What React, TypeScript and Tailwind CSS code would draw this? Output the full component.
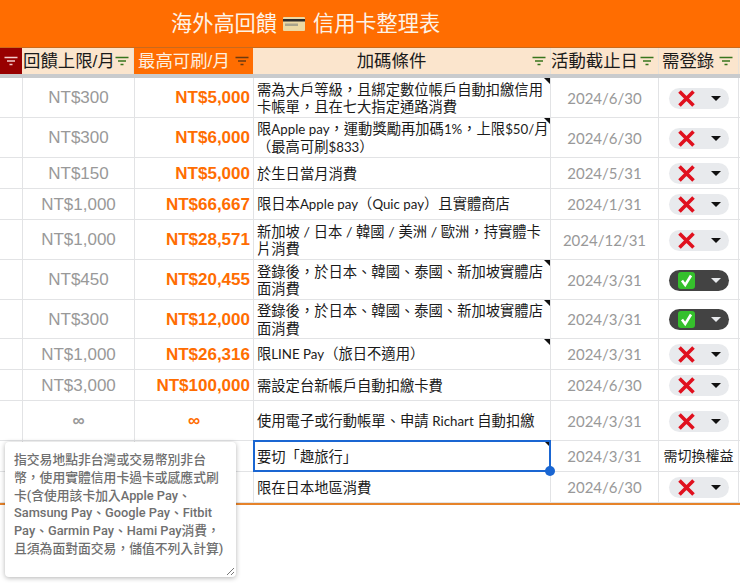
import type { ReactNode } from "react";

const FONT = "font-['Liberation_Sans','Noto_Sans_CJK_TC',sans-serif]";
const COND = "font-['Lato','Noto_Sans_CJK_TC',sans-serif]";
const NOTE = "font-['Roboto','Noto_Sans_CJK_TC',sans-serif]";

function Filter({ color = "#38761d" }: { color?: string }) {
  return (
    <svg width="14" height="10" viewBox="0 0 14 10" className="shrink-0">
      <path d="M0.5 1.5H13.5M3 5H11M5.5 8.5H8.5" stroke={color} strokeWidth="1.4" fill="none" />
    </svg>
  );
}

function Pick({ ok = false }: { ok?: boolean }) {
  return (
    <div className={`flex items-center w-[60px] h-[21px] rounded-full pl-[9px] ${ok ? "bg-[#434343]" : "bg-[#e8eaed]"}`}>
      {ok ? (
        <svg width="17" height="17" viewBox="0 0 17 17">
          <rect x="0" y="0" width="17" height="17" rx="3" fill="#35c02c" />
          <path d="M4 8.5L7.2 13L13 3.5" stroke="#fff" strokeWidth="2.6" fill="none" />
        </svg>
      ) : (
        <svg width="17" height="17" viewBox="0 0 17 17">
          <path d="M1.5 1.5L15.5 15.5M15.5 1.5L1.5 15.5" stroke="#e0101e" strokeWidth="3.6" fill="none" />
        </svg>
      )}
      <svg width="10" height="5" viewBox="0 0 10 5" className="ml-[16px]">
        <path d="M0 0H10L5 5Z" fill={ok ? "#e8eaed" : "#111"} />
      </svg>
    </div>
  );
}

function L({ children }: { children: ReactNode }) {
  return <span className="text-[13.3px]">{children}</span>;
}

type Row = { h: string; cap: string; max: string; cond: ReactNode; date: string; ok?: boolean; tag?: string; note?: boolean };

const rows: Row[] = [
  { h: "h-[40px]", cap: "NT$300", max: "NT$5,000", cond: "需為大戶等級，且綁定數位帳戶自動扣繳信用卡帳單，且在七大指定通路消費", date: "2024/6/30", note: true },
  { h: "h-[40px]", cap: "NT$300", max: "NT$6,000", cond: <>限<L>Apple pay</L>，運動獎勵再加碼<L>1%</L>，上限<L>$50/</L>月（最高可刷<L>$833</L>）</>, date: "2024/6/30", note: true },
  { h: "h-[31px]", cap: "NT$150", max: "NT$5,000", cond: "於生日當月消費", date: "2024/5/31" },
  { h: "h-[31px]", cap: "NT$1,000", max: "NT$66,667", cond: <>限日本<L>Apple pay</L>（<L>Quic pay</L>）且實體商店</>, date: "2024/1/31" },
  { h: "h-[40px]", cap: "NT$1,000", max: "NT$28,571", cond: "新加坡 / 日本 / 韓國 / 美洲 / 歐洲，持實體卡片消費", date: "2024/12/31" },
  { h: "h-[40px]", cap: "NT$450", max: "NT$20,455", cond: "登錄後，於日本、韓國、泰國、新加坡實體店面消費", date: "2024/3/31", ok: true, note: true },
  { h: "h-[39px]", cap: "NT$300", max: "NT$12,000", cond: "登錄後，於日本、韓國、泰國、新加坡實體店面消費", date: "2024/3/31", ok: true, note: true },
  { h: "h-[31px]", cap: "NT$1,000", max: "NT$26,316", cond: <>限<L>LINE Pay</L>（旅日不適用）</>, date: "2024/3/31", note: true },
  { h: "h-[31px]", cap: "NT$3,000", max: "NT$100,000", cond: "需設定台新帳戶自動扣繳卡費", date: "2024/6/30" },
  { h: "h-[40px]", cap: "∞", max: "∞", cond: <>使用電子或行動帳單、申請 <L>Richart</L> 自動扣繳</>, date: "2024/3/31" },
  { h: "h-[31px]", cap: "", max: "", cond: "要切「趣旅行」", date: "2024/3/31", tag: "需切換權益", note: true },
  { h: "h-[31px]", cap: "", max: "", cond: "限在日本地區消費", date: "2024/6/30" },
];

const cols = "grid grid-cols-[23px_112px_119px_297px_108px_80px_1px]";
const headCols = "grid grid-cols-[22px_112px_119px_298px_108px_80px_1px]";
const cell = "border-r border-b border-[#e2e3e5] flex items-center min-w-0 pt-[1px]";
const head = "flex items-center h-full border-r border-[#e8e2d8] bg-[#fbe5cd] text-[17.4px] text-[#1a1a1a] min-w-0";

export default function App() {
  return (
    <div className={`relative w-[740px] h-[584px] overflow-hidden bg-white ${FONT}`}>
      <div className="h-[48px] bg-[#ff6d01] border-b border-[#c96a1c] flex items-center pl-[171px] text-[21.2px] text-[#fdf3e7]">
        <span>海外高回饋</span>
        <svg width="22" height="14" viewBox="0 0 22 14" className="ml-[6px] mr-[8px]" aria-label="💳">
          <rect width="22" height="14" rx="1" fill="#ecd9a4" />
          <rect y="2" width="22" height="2.5" fill="#2b2b2b" />
          <rect x="2" y="6.5" width="13" height="2.5" fill="#a9a48c" />
        </svg>
        <span>信用卡整理表</span>
      </div>
      <div className={`${headCols} h-[26px]`}>
        <div className="bg-[#980000] flex items-center justify-center"><Filter color="#f4cccc" /></div>
        <div className={`${head} justify-between pl-[1px] pr-[4px]`}><span>回饋上限/月</span><Filter /></div>
        <div className="flex items-center bg-[#ff6d01] text-[#fdf0e0] text-[17.4px] pl-[4px] pr-[4px] justify-between"><span>最高可刷/月</span><Filter color="#6b3a10" /></div>
        <div className={`${head} justify-center relative pr-[20px]`}><span>加碼條件</span><span className="absolute right-[4px] top-[8px]"><Filter /></span></div>
        <div className={`${head} justify-between pl-[0px] pr-[4px]`}><span>活動截止日</span><Filter /></div>
        <div className={`${head} justify-between pl-[3px] pr-[5px]`}><span>需登錄</span><Filter /></div>
        <div className="bg-[#fbe5cd]" />
      </div>
      <div className="h-[4px] bg-[#c9cbcd]" />
      {rows.map((r, i) => (
        <div key={i} className={`${cols} ${r.h}`}>
          <div className={cell} />
          <div className={`${cell} justify-center text-[#999999] text-[17px] ${r.cap === "∞" ? "font-bold" : ""}`}>{r.cap}</div>
          <div className={`${cell} font-bold text-[#ff6d01] text-[17px] ${r.max === "∞" ? "justify-center" : "justify-end pr-[3px]"}`}>{r.max}</div>
          <div className={`${cell} relative pl-[3px] pr-0 text-[14.3px] leading-[17.4px] text-[#1a1a1a] ${COND}`}>
            <span>{r.cond}</span>
            {r.note && <span className="absolute right-0 top-0 w-0 h-0 border-l-[6px] border-l-transparent border-t-[6px] border-t-[#111]" />}
            {i === 10 && (
              <>
                <span className="absolute -left-px -top-px right-[-1px] bottom-[-1px] border-2 border-[#1a66d2]" />
                <span className="absolute z-10 right-[-5px] bottom-[-5px] w-[10px] h-[10px] rounded-full bg-[#1a66d2]" />
              </>
            )}
          </div>
          <div className={`${cell} justify-center text-[#999999] text-[15px] ${COND}`}>{r.date}</div>
          <div className={`${cell} justify-center text-[14px] text-[#1a1a1a]`}>{r.tag ? r.tag : <Pick ok={r.ok} />}</div>
          <div className="border-b border-[#e2e3e5]" />
        </div>
      ))}
      <div className="h-[2px] bg-[#e6832a]" />
      <div className={`absolute left-[5px] top-[442px] w-[231px] h-[135px] bg-white rounded-[4px] shadow-[0_1px_5px_rgba(0,0,0,0.3)] pl-[9px] pr-[8px] pt-[9px] text-[12.8px] font-medium leading-[17.8px] text-[#6f6f6f] ${NOTE}`}>
        指交易地點非台灣或交易幣別非台幣，使用實體信用卡過卡或感應式刷卡(含使用該卡加入Apple Pay、Samsung Pay、Google Pay、Fitbit Pay、Garmin Pay、Hami Pay消費，且須為面對面交易，儲值不列入計算)
        <svg width="9" height="9" viewBox="0 0 9 9" className="absolute right-[1px] bottom-[1px]">
          <path d="M1 8L8 1M5 8L8 5" stroke="#555" strokeWidth="0.8" />
        </svg>
      </div>
    </div>
  );
}
